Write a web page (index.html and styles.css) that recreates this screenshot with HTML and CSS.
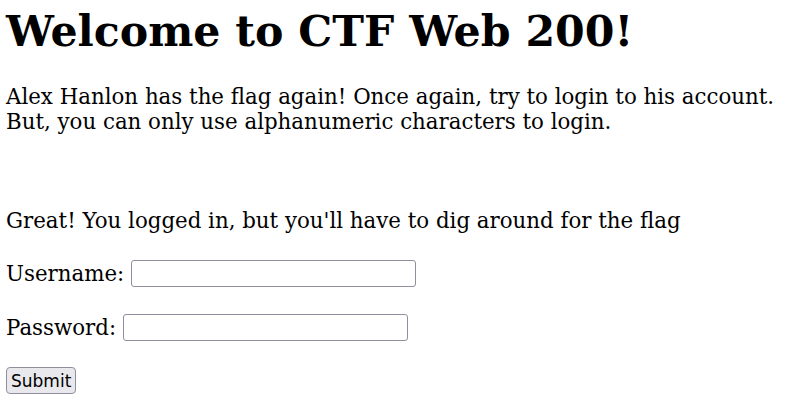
FILE: index.html
```html
<!DOCTYPE html>
<html>
<head>
<meta charset="utf-8">
<link rel="stylesheet" href="styles.css">
</head>
<body class="page">
<h1 class="title">Welcome to CTF Web 200!</h1>
<p class="intro">Alex Hanlon has the flag again! Once again, try to login to his account.<br>But, you can only use alphanumeric characters to login.</p>
<p class="msg">Great! You logged in, but you'll have to dig around for the flag</p>
<form class="login">
<label class="row">Username:<input class="field" type="text" name="username"></label>
<label class="row">Password:<input class="field" type="password" name="password"></label>
<div class="row"><input class="btn" type="submit" value="Submit"></div>
</form>
</body>
</html>
```
FILE: styles.css
```css
html, body {
  background: #fff;
}
.page {
  font-family: "DejaVu Serif", serif;
  font-size: 21.33px;
  color: #000;
  margin: 0;
  padding: 0 6px;
}
.title {
  font-size: 42.67px;
  font-weight: bold;
  margin: 5.5px 0 28px;
}
.intro {
  margin: 0;
}
.msg {
  margin: 74px 0 0;
}
.login {
  margin-top: 27.5px;
  display: flex;
  flex-direction: column;
  gap: 26.7px;
}
.row {
  display: flex;
  align-items: center;
  height: 27px;
}
.field {
  margin: 0 0 0 7px;
  width: 285px;
  height: 27px;
  box-sizing: border-box;
  border: 1px solid #8f8f9d;
  border-radius: 3px;
  background: #fff;
  padding: 1px 3px;
}
.btn {
  margin: 0;
  height: 27px;
  box-sizing: border-box;
  font-family: "DejaVu Sans", sans-serif;
  font-size: 17px;
  color: #000;
  background: #e9e9ed;
  border: 1px solid #8f8f9d;
  border-radius: 4px;
  padding: 0 4px;
}
```
